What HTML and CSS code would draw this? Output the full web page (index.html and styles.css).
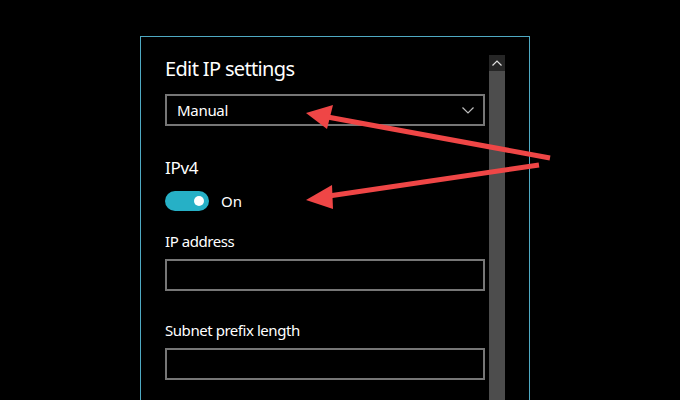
FILE: index.html
```html
<!DOCTYPE html>
<html>
<head>
<meta charset="utf-8">
<link rel="stylesheet" href="styles.css">
</head>
<body>
<div class="stage">
  <div class="dialog">
    <div class="content">
      <div class="title">Edit IP settings</div>
      <div class="select">
        <span>Manual</span>
        <svg class="chev" width="12" height="7" viewBox="0 0 12 7"><path d="M0.5 0.5 L6 6 L11.5 0.5" fill="none" stroke="#bdbdbd" stroke-width="1.2"/></svg>
      </div>
      <div class="section">IPv4</div>
      <div class="toggle-row">
        <div class="toggle"><div class="knob"></div></div>
        <span class="toggle-label">On</span>
      </div>
      <div class="label first">IP address</div>
      <div class="input"></div>
      <div class="label">Subnet prefix length</div>
      <div class="input"></div>
    </div>
    <div class="scrollbar">
      <div class="scroll-up">
        <svg width="10" height="6" viewBox="0 0 10 6"><path d="M0.5 5.5 L5 1 L9.5 5.5" fill="none" stroke="#e0e0e0" stroke-width="1.2"/></svg>
      </div>
      <div class="scroll-track"></div>
    </div>
  </div>
  <svg class="arrows" width="680" height="400" viewBox="0 0 680 400">
    <g fill="#ef4646" stroke="#ef4646">
      <line x1="550" y1="158" x2="322" y2="116" stroke-width="5"/>
      <polygon points="306,113 333,105 327,129" stroke="none"/>
      <line x1="539" y1="165" x2="322" y2="197" stroke-width="5"/>
      <polygon points="306,200 332,185 333,209" stroke="none"/>
    </g>
  </svg>
</div>
</body>
</html>
```

FILE: styles.css
```css
html, body {
  margin: 0;
  padding: 0;
  background: #000;
}
body {
  width: 680px;
  height: 400px;
  overflow: hidden;
  font-family: "Noto Sans", "Open Sans", sans-serif;
  color: #fff;
}
.stage {
  position: relative;
  width: 680px;
  height: 400px;
  padding-top: 36px;
  box-sizing: border-box;
  overflow: hidden;
}
.dialog {
  margin-left: 140px;
  width: 390px;
  height: 364px;
  box-sizing: border-box;
  border: 1px solid #4fa9c2;
  border-bottom: none;
  display: flex;
}
.content {
  width: 320px;
  padding-left: 24px;
  padding-right: 4px;
}
.title {
  margin-top: 18px;
  font-size: 20px;
  line-height: 28px;
  letter-spacing: -0.65px;
}
.select {
  margin-top: 11px;
  height: 32px;
  box-sizing: border-box;
  border: 2px solid #767676;
  display: flex;
  align-items: center;
  justify-content: space-between;
  padding: 0 9px 0 10px;
  font-size: 15px;
  letter-spacing: -0.3px;
}
.chev {
  display: block;
}
.section {
  margin-top: 30px;
  font-size: 17px;
  line-height: 24px;
  letter-spacing: -0.3px;
}
.toggle-row {
  margin-top: 11px;
  height: 20px;
  display: flex;
  align-items: center;
}
.toggle {
  width: 44px;
  height: 20px;
  border-radius: 10px;
  background: #26b0c6;
  display: flex;
  align-items: center;
  justify-content: flex-end;
  padding-right: 5px;
  box-sizing: border-box;
}
.knob {
  width: 10px;
  height: 10px;
  border-radius: 50%;
  background: #fff;
}
.toggle-label {
  margin-left: 12px;
  font-size: 15px;
}
.label {
  margin-top: 29px;
  font-size: 15px;
  line-height: 20px;
  letter-spacing: -0.45px;
}
.label.first {
  margin-top: 20px;
}
.input {
  margin-top: 8px;
  height: 32px;
  box-sizing: border-box;
  border: 2px solid #767676;
}
.scrollbar {
  width: 16px;
  margin-top: 18px;
  display: flex;
  flex-direction: column;
}
.scroll-up {
  height: 16px;
  background: #262626;
  display: flex;
  align-items: center;
  justify-content: center;
}
.scroll-up svg {
  display: block;
}
.scroll-track {
  flex: 1;
  background: #4d4d4d;
}
.arrows {
  position: absolute;
  left: 0;
  top: 0;
}
```
